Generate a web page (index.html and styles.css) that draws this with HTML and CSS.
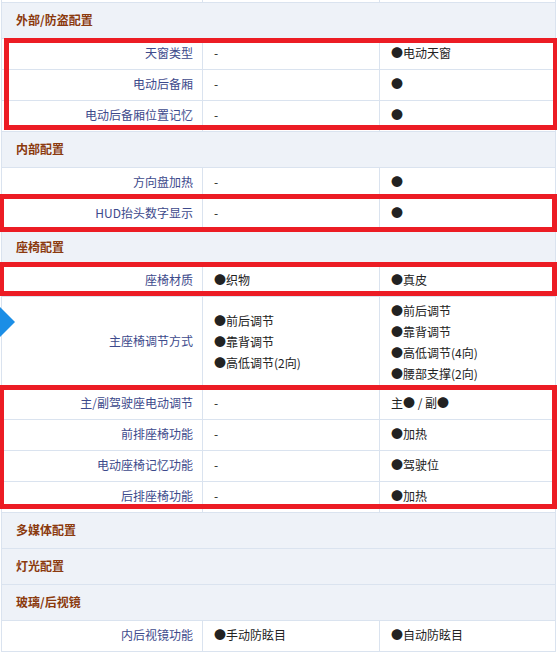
FILE: index.html
```html
<!DOCTYPE html>
<html lang="zh-CN">

<head>
    <meta charset="UTF-8">
    <title>参数配置</title>
    <link rel="stylesheet" href="styles.css">
</head>

<body>

    <main class="spec">
        <div class="row stub">
            <div class="name"></div>
            <div class="val"></div>
            <div class="val"></div>
        </div>

        <div class="group-title">外部/防盗配置</div>
        <div class="mark mark-a">
            <div class="row">
                <div class="name">天窗类型</div>
                <div class="val">-</div>
                <div class="val">●电动天窗</div>
            </div>
            <div class="row">
                <div class="name">电动后备厢</div>
                <div class="val">-</div>
                <div class="val">●</div>
            </div>
            <div class="row">
                <div class="name">电动后备厢位置记忆</div>
                <div class="val">-</div>
                <div class="val">●</div>
            </div>
        </div>

        <div class="group-title">内部配置</div>
        <div class="row">
            <div class="name">方向盘加热</div>
            <div class="val">-</div>
            <div class="val">●</div>
        </div>
        <div class="mark mark-b">
            <div class="row">
                <div class="name">HUD抬头数字显示</div>
                <div class="val">-</div>
                <div class="val">●</div>
            </div>
        </div>

        <div class="group-title">座椅配置</div>
        <div class="mark mark-c">
            <div class="row">
                <div class="name">座椅材质</div>
                <div class="val">●织物</div>
                <div class="val">●真皮</div>
            </div>
        </div>
        <div class="row tall">
            <svg class="pointer" width="15" height="30" viewBox="0 0 15 30">
                <polygon points="0,0 15,15 0,30" fill="#1b8ee6" />
            </svg>
            <div class="name">主座椅调节方式</div>
            <div class="val">
                <span>●前后调节</span>
                <span>●靠背调节</span>
                <span>●高低调节(2向)</span>
            </div>
            <div class="val">
                <span>●前后调节</span>
                <span>●靠背调节</span>
                <span>●高低调节(4向)</span>
                <span>●腰部支撑(2向)</span>
            </div>
        </div>
        <div class="mark mark-d">
            <div class="row">
                <div class="name">主/副驾驶座电动调节</div>
                <div class="val">-</div>
                <div class="val">主● / 副●</div>
            </div>
            <div class="row">
                <div class="name">前排座椅功能</div>
                <div class="val">-</div>
                <div class="val">●加热</div>
            </div>
            <div class="row">
                <div class="name">电动座椅记忆功能</div>
                <div class="val">-</div>
                <div class="val">●驾驶位</div>
            </div>
            <div class="row">
                <div class="name">后排座椅功能</div>
                <div class="val">-</div>
                <div class="val">●加热</div>
            </div>
        </div>

        <div class="group-title">多媒体配置</div>
        <div class="group-title">灯光配置</div>
        <div class="group-title">玻璃/后视镜</div>
        <div class="row">
            <div class="name">内后视镜功能</div>
            <div class="val">●手动防眩目</div>
            <div class="val">●自动防眩目</div>
        </div>
    </main>

</body>

</html>
```

FILE: styles.css
```css
* {
    margin: 0;
    padding: 0;
    box-sizing: border-box;
}

body {
    background-color: #fff;
    font-family: "Noto Sans CJK SC", "Liberation Sans", sans-serif;
    font-size: 12px;
    color: #222;
}

.spec {
    width: 555px;
    margin-left: 1px;
    border-left: 1px solid #dae3ef;
    border-right: 1px solid #dae3ef;
}

.row {
    position: relative;
    display: grid;
    grid-template-columns: 200px 177px 176px;
    height: 31px;
    border-bottom: 1px solid #dae3ef;
    background: #fff;
}

.row.stub {
    height: 3px;
}

.row.tall {
    height: 92px;
}

.name {
    display: flex;
    align-items: center;
    justify-content: flex-end;
    padding: 0 9px 4px 0;
    color: #3d4a8c;
}

.val {
    display: flex;
    flex-direction: column;
    justify-content: center;
    padding: 0 0 4px 11px;
    border-left: 1px solid #dae3ef;
    line-height: 21px;
}

.stub .name,
.stub .val {
    padding: 0;
}

.tall .val {
    padding-bottom: 2px;
}

.group-title {
    height: 36px;
    display: flex;
    align-items: center;
    padding: 0 0 3px 14px;
    background: #eef2f8;
    border-bottom: 1px solid #dae3ef;
    color: #8b3a0e;
    font-weight: bold;
}

.pointer {
    position: absolute;
    left: -2px;
    top: 10px;
}

/* red annotation boxes */
.mark {
    position: relative;
}

.mark::after {
    content: "";
    position: absolute;
    border: 5px solid #ec1c24;
    pointer-events: none;
}

.mark-a::after {
    top: -1px;
    bottom: 2px;
    left: 2px;
    right: -3px;
}

.mark-b::after {
    top: -5px;
    bottom: -2px;
    left: -3px;
    right: -2px;
}

.mark-c::after {
    top: -4px;
    bottom: 1px;
    left: -3px;
    right: -2px;
}

.mark-d::after {
    top: -4px;
    bottom: 4px;
    left: -3px;
    right: -2px;
}
```
